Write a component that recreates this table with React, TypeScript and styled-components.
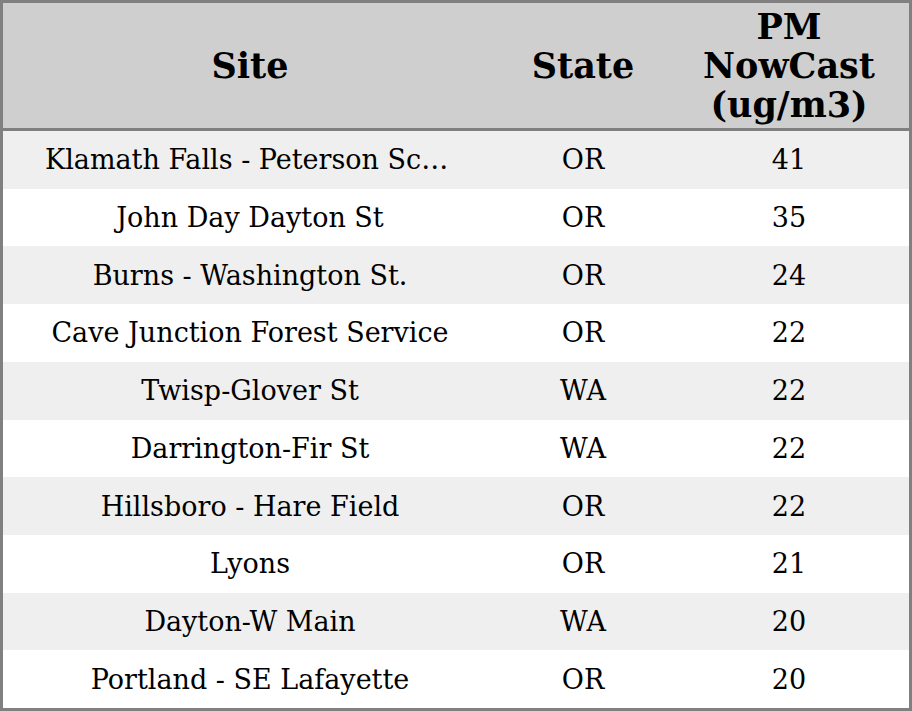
import React from 'react';
import styled, { createGlobalStyle } from 'styled-components';

const rows = [
  { site: 'Klamath Falls - Peterson School', state: 'OR', pm: 41 },
  { site: 'John Day Dayton St', state: 'OR', pm: 35 },
  { site: 'Burns - Washington St.', state: 'OR', pm: 24 },
  { site: 'Cave Junction Forest Service', state: 'OR', pm: 22 },
  { site: 'Twisp-Glover St', state: 'WA', pm: 22 },
  { site: 'Darrington-Fir St', state: 'WA', pm: 22 },
  { site: 'Hillsboro - Hare Field', state: 'OR', pm: 22 },
  { site: 'Lyons', state: 'OR', pm: 21 },
  { site: 'Dayton-W Main', state: 'WA', pm: 20 },
  { site: 'Portland - SE Lafayette', state: 'OR', pm: 20 },
];

function App(): JSX.Element {
  return (
    <>
      <GlobalStyle />
      <Table>
        <HeaderRow>
          <HeadCell>Site</HeadCell>
          <HeadCell>State</HeadCell>
          <HeadCell>
            PM
            <br />
            NowCast
            <br />
            (ug/m3)
          </HeadCell>
        </HeaderRow>
        {rows.map((row, i) => (
          <Row key={row.site} $odd={i % 2 === 0}>
            <SiteCell>{row.site}</SiteCell>
            <Cell>{row.state}</Cell>
            <Cell>{row.pm}</Cell>
          </Row>
        ))}
      </Table>
    </>
  );
}

export default App;

const GlobalStyle = createGlobalStyle`
  html, body {
    margin: 0;
    padding: 0;
    background: #fff;
  }
  * {
    box-sizing: border-box;
  }
`;

const Table = styled.div`
  height: 100vh;
  width: 100vw;
  display: flex;
  flex-direction: column;
  border: solid 3px #808080;
  font-family: 'DejaVu Serif', serif;
  color: #000;
`;

const HeaderRow = styled.div`
  height: 128px;
  flex: none;
  display: grid;
  grid-template-columns: 494px 172px 1fr;
  background-color: #cfcfcf;
  border-bottom: solid 3px #808080;
`;

const HeadCell = styled.div`
  display: flex;
  align-items: center;
  justify-content: center;
  text-align: center;
  font-weight: bold;
  font-size: 35px;
  line-height: 39px;
`;

const Row = styled.div<{ $odd: boolean }>`
  flex: 1;
  display: grid;
  grid-template-columns: 494px 172px 1fr;
  align-items: center;
  background-color: ${(p) => (p.$odd ? '#efefef' : '#ffffff')};
`;

const Cell = styled.div`
  text-align: center;
  font-size: 27px;
  line-height: 31px;
  padding: 0 8px;
`;

const SiteCell = styled(Cell)`
  padding: 0 42px;
  white-space: nowrap;
  overflow: hidden;
  text-overflow: ellipsis;
`;
